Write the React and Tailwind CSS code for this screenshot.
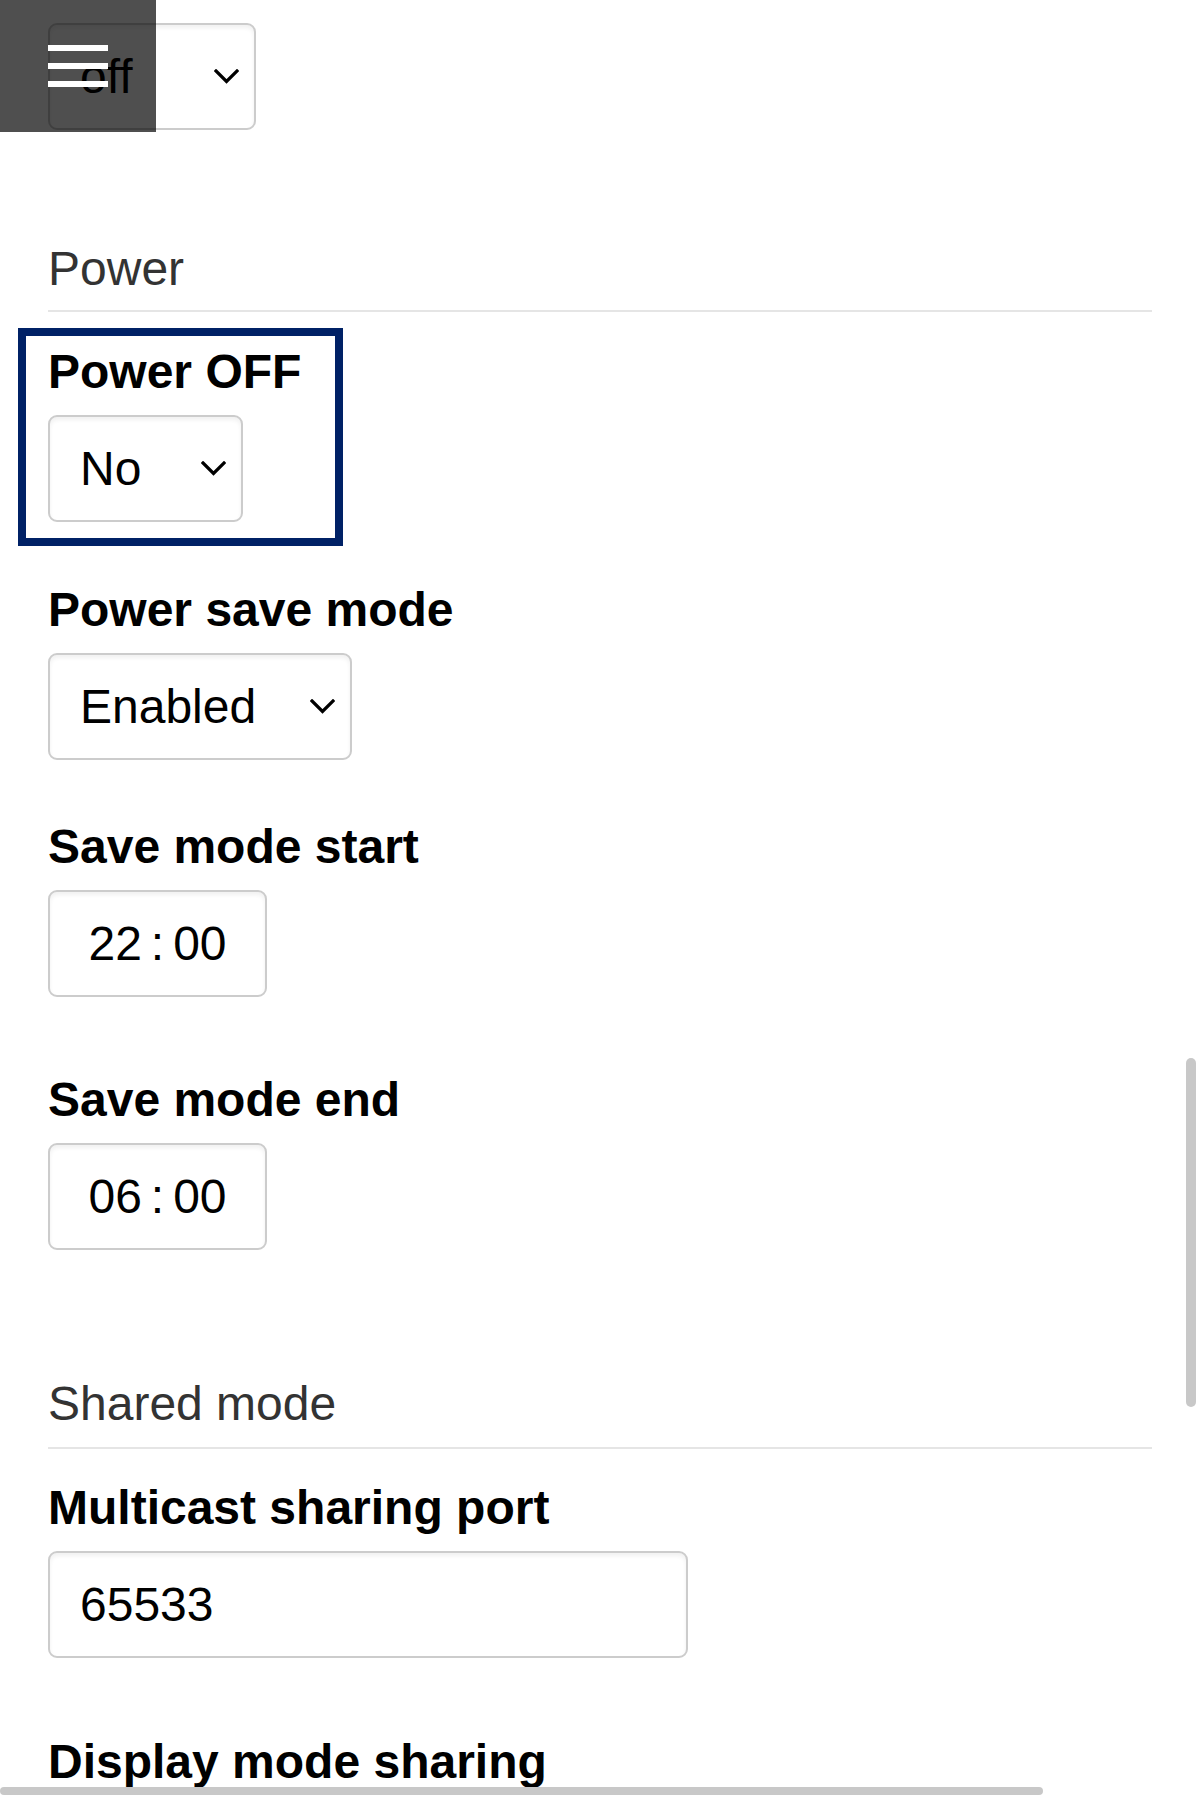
import React from "react";

function Chevron() {
  return (
    <svg width="25" height="15" viewBox="0 0 25 15" fill="none" stroke="#000" strokeWidth="3.2" strokeLinecap="square" strokeLinejoin="miter">
      <path d="M2 2 L12.5 12.5 L23 2" />
    </svg>
  );
}

function Select({ value, w }) {
  return (
    <div className={`flex h-[107px] items-center justify-between rounded-[9px] border-2 border-[#cccccc] bg-white pl-[30px] pr-[15px] shadow-[inset_0_3px_4px_rgba(0,0,0,0.06)] ${w}`}>
      <span className="text-[48px] leading-[54px] text-black">{value}</span>
      <Chevron />
    </div>
  );
}

function TimeInput({ h, m }) {
  return (
    <div className="mt-[16px] flex h-[107px] w-[219px] items-center justify-center rounded-[9px] border-2 border-[#cccccc] bg-white shadow-[inset_0_3px_4px_rgba(0,0,0,0.06)]">
      <span className="text-[48px] leading-[54px] text-black">{h}</span>
      <span className="mx-[9px] text-[48px] leading-[54px] text-black">:</span>
      <span className="text-[48px] leading-[54px] text-black">{m}</span>
    </div>
  );
}

function Label({ children, className = "" }) {
  return <div className={`text-[48px] font-bold leading-[54px] text-black ${className}`}>{children}</div>;
}

export default function App() {
  return (
    <div className="relative h-[1800px] w-[1200px] overflow-hidden bg-white font-['Liberation_Sans',Arial,sans-serif]">
      <div className="px-[48px] pt-[23px]">
        <Select value="off" w="w-[208px]" />

        <h2 className="mt-[112px] border-b-2 border-[#e5e5e5] pb-[14px] text-[48px] font-normal leading-[54px] text-[#333333]">Power</h2>

        <div className="mt-[24px] -ml-[22px] w-[309px] pb-[16px] pl-[22px] pt-[9px] outline-8 outline-solid outline-[#002166]">
          <Label>Power OFF</Label>
          <div className="mt-[16px]">
            <Select value="No" w="w-[195px]" />
          </div>
        </div>

        <Label className="mt-[45px]">Power save mode</Label>
        <div className="mt-[16px]">
          <Select value="Enabled" w="w-[304px]" />
        </div>

        <Label className="mt-[60px]">Save mode start</Label>
        <TimeInput h="22" m="00" />

        <Label className="mt-[76px]">Save mode end</Label>
        <TimeInput h="06" m="00" />

        <h2 className="mt-[127px] border-b-2 border-[#e5e5e5] pb-[16px] text-[48px] font-normal leading-[54px] text-[#333333]">Shared mode</h2>

        <Label className="mt-[32px]">Multicast sharing port</Label>
        <div className="mt-[16px] flex h-[107px] w-[640px] items-center rounded-[9px] border-2 border-[#cccccc] bg-white pl-[30px] shadow-[inset_0_3px_4px_rgba(0,0,0,0.06)]">
          <span className="text-[48px] leading-[54px] text-black">65533</span>
        </div>

        <Label className="mt-[77px]">Display mode sharing</Label>
      </div>

      {/* hamburger overlay */}
      <div className="absolute left-0 top-0 flex h-[132px] w-[156px] flex-col gap-[12px] bg-[rgba(0,0,0,0.69)] pl-[48px] pt-[45px]">
        <div className="h-[6px] w-[60px] bg-white" />
        <div className="h-[6px] w-[60px] bg-white" />
        <div className="h-[6px] w-[60px] bg-white" />
      </div>

      {/* overlay scrollbars */}
      <div className="absolute left-[1186px] top-[1058px] h-[349px] w-[10px] rounded-full bg-[#c8c8c8]" />
      <div className="absolute left-0 top-[1787px] h-[8px] w-[1043px] rounded-full bg-[#c8c8c8]" />
    </div>
  );
}
